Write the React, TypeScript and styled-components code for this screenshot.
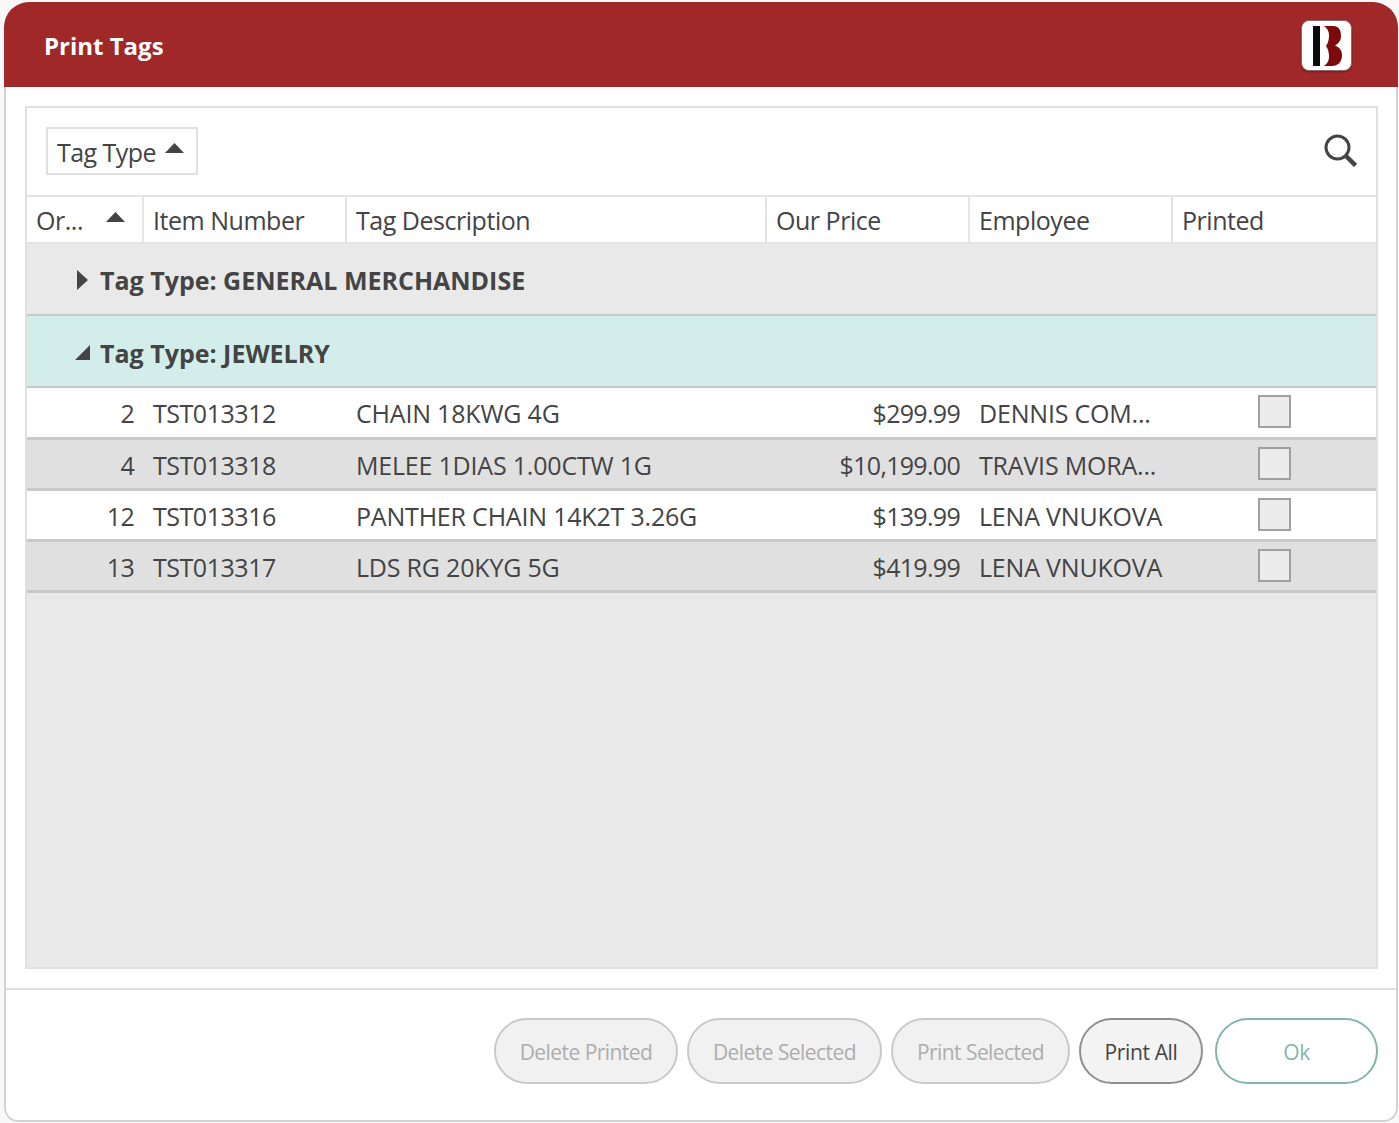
import React from "react";
import styled, { createGlobalStyle } from "styled-components";

const Global = createGlobalStyle`
  html, body { margin: 0; padding: 0; background: #fff; }
  body { font-family: "Open Sans", "Noto Sans", sans-serif; color: #444; }
  * { box-sizing: border-box; }
`;

const Stage = styled.div`
  width: 1399px;
  height: 1123px;
  padding: 2px 1px 1px 4px;
  background: #f8f8f8;
  overflow: hidden;
`;
const Dialog = styled.div`
  width: 1394px;
  height: 1120px;
  border-radius: 25px 25px 14px 14px;
  display: flex;
  flex-direction: column;
  overflow: hidden;
`;
const TitleBar = styled.header`
  height: 85px;
  background: #a12829;
  padding: 2px 46px 0 40px;
  display: flex;
  align-items: center;
  justify-content: space-between;
  flex: none;
`;
const Title = styled.h1`
  margin: 0;
  font-size: 24px;
  line-height: 32px;
  font-weight: 700;
  color: #fff;
`;
const Logo = styled.div`
  width: 51px;
  height: 51px;
  border-radius: 8px;
  background: #fff;
  border: 1px solid #8f6a6a;
  box-shadow: 0 1px 2px rgba(60, 20, 20, 0.5);
  display: flex;
  align-items: center;
  justify-content: center;
`;
const Body = styled.div`
  flex: 1;
  min-height: 0;
  background: #fff;
  border: solid #d2d2d2;
  border-width: 0 2px 2px 2px;
  border-radius: 0 0 14px 14px;
  display: flex;
  flex-direction: column;
`;
const Content = styled.main`
  flex: 1;
  padding: 19px 18px 19px 19px;
  display: flex;
  min-height: 0;
`;
const Grid = styled.section`
  flex: 1;
  border: 2px solid #e0e0e0;
  display: flex;
  flex-direction: column;
  background: #e9e9e9;
`;
const Toolbar = styled.div`
  height: 89px;
  background: #fff;
  padding: 19px 18px 0 19px;
  display: flex;
  align-items: flex-start;
  justify-content: space-between;
  border-bottom: 2px solid #e4e4e4;
  flex: none;
`;
const GroupChip = styled.div`
  width: 152px;
  height: 48px;
  border: 2px solid #e0e0e0;
  display: flex;
  align-items: center;
  padding: 2px 0 0 9px;
  gap: 9px;
  font-size: 25px;
  letter-spacing: -0.55px;
  color: #444;
`;
const SearchButton = styled.div`
  margin-top: 7px;
  width: 34px;
  height: 36px;
  color: #444;
`;
const columns = "116px 203px 420px 203px 203px 1fr";
const HeaderRow = styled.div`
  display: grid;
  grid-template-columns: ${columns};
  height: 47px;
  background: #fff;
  border-bottom: 2px solid #e4e4e4;
  flex: none;
`;
const HeaderCell = styled.div<{ $first?: boolean }>`
  display: flex;
  align-items: center;
  justify-content: space-between;
  padding: 1px 18px 0 9px;
  margin-left: ${(p) => (p.$first ? "0" : "-1px")};
  font-size: 25px;
  letter-spacing: -0.47px;
  color: #444;
  white-space: nowrap;
  border-left: ${(p) => (p.$first ? "0" : "2px solid #e4e4e4")};
`;
const GroupRow = styled.div<{ $open?: boolean }>`
  height: 72px;
  background: ${(p) => (p.$open ? "#d3eeea" : "#e9e9e9")};
  border-bottom: 2px solid #c8c8c8;
  display: flex;
  align-items: center;
  padding: ${(p) => (p.$open ? "3px" : "2px")} 0 0 47px;
  flex: none;
`;
const Expander = styled.span<{ $offset: number }>`
  width: 26px;
  padding-left: ${(p) => p.$offset}px;
  display: flex;
  color: #444;
`;
const GroupLabel = styled.span`
  font-size: 25px;
  font-weight: 700;
  color: #444;
`;
const Row = styled.div<{ $alt?: boolean; $h: number }>`
  display: grid;
  grid-template-columns: ${columns};
  height: ${(p) => p.$h}px;
  background: ${(p) => (p.$alt ? "#e0e0e0" : "#fff")};
  border-bottom: 3px solid #c8c8c8;
  flex: none;
`;
const Cell = styled.div<{ $right?: boolean; $caps?: boolean }>`
  display: flex;
  align-items: center;
  justify-content: ${(p) => (p.$right ? "flex-end" : "flex-start")};
  padding: 1px ${(p) => (p.$right ? "9px" : "0")} 0 ${(p) => (p.$right ? "0" : "10px")};
  font-size: 25px;
  letter-spacing: ${(p) => (p.$caps ? "-0.2px" : p.$right ? "-0.7px" : "-0.47px")};
  color: #444;
  white-space: nowrap;
`;
const CheckCell = styled.div`
  display: flex;
  justify-content: center;
  padding-top: 7px;
`;
const Check = styled.span`
  width: 33px;
  height: 33px;
  background: #ececec;
  border: 2px solid #a0a0a0;
  display: block;
`;
const Footer = styled.footer`
  height: 132px;
  flex: none;
  border-top: 2px solid #dedede;
  padding: 28px 18px 0 0;
  display: flex;
  justify-content: flex-end;
  gap: 9px;
`;
const Pill = styled.button<{ $w: number; $tone: "off" | "on" | "ok" }>`
  width: ${(p) => p.$w}px;
  height: 66px;
  border-radius: 33px;
  font-family: inherit;
  font-size: 21px;
  letter-spacing: ${(p) => (p.$tone === "off" ? "-0.55px" : "-0.35px")};
  padding: 2px 0 0;
  border: 2px solid ${(p) => (p.$tone === "off" ? "#c9c9c9" : p.$tone === "on" ? "#8f8f8f" : "#84b5ab")};
  background: ${(p) => (p.$tone === "ok" ? "#fff" : p.$tone === "on" ? "#f3f3f3" : "#f1f1f1")};
  color: ${(p) => (p.$tone === "off" ? "#adadad" : p.$tone === "on" ? "#444" : "#84b5ab")};
  margin-left: ${(p) => (p.$tone === "ok" ? "3px" : "0")};
`;
const SortArrow = styled.svg<{ $lift: number }>`
  width: 19px;
  height: 10px;
  margin-bottom: ${(p) => p.$lift}px;
  flex: none;
`;

const UpArrow = ({ lift }: { lift: number }) => (
  <SortArrow $lift={lift} viewBox="0 0 19 10">
    <path d="M9.5 0 L19 10 L0 10 Z" fill="#444" />
  </SortArrow>
);

const rows = [
  ["2", "TST013312", "CHAIN 18KWG 4G", "$299.99", "DENNIS COM...", 52],
  ["4", "TST013318", "MELEE 1DIAS 1.00CTW 1G", "$10,199.00", "TRAVIS MORA...", 51],
  ["12", "TST013316", "PANTHER CHAIN 14K2T 3.26G", "$139.99", "LENA VNUKOVA", 51],
  ["13", "TST013317", "LDS RG 20KYG 5G", "$419.99", "LENA VNUKOVA", 51],
] as const;

export default function App() {
  return (
    <Stage>
      <Global />
      <Dialog>
        <TitleBar>
          <Title>Print Tags</Title>
          <Logo>
            <svg width="32" height="42" viewBox="0 0 32 42">
              <rect x="2" y="1" width="7" height="40" fill="#0a0a0a" />
              <path
                d="M13 1 H22 C29 1 30 7 30 11 C30 16 27 19 24 20.5 C28 22 31 25 31 30 C31 37 27 41 21 41 H13 C16 39 18 36 18 32 C18 27 17 24 15 21 C17 18 18 15 18 10 C18 6 16 3 13 1 Z"
                fill="#7d0a0a"
              />
            </svg>
          </Logo>
        </TitleBar>
        <Body>
          <Content>
            <Grid>
              <Toolbar>
                <GroupChip>
                  Tag Type
                  <UpArrow lift={8} />
                </GroupChip>
                <SearchButton>
                  <svg width="33" height="33" viewBox="0 0 33 33" fill="none" stroke="currentColor">
                    <circle cx="13.5" cy="13.5" r="11.5" strokeWidth="3" />
                    <path d="M22 22 L31.5 31.5" strokeWidth="4.5" />
                  </svg>
                </SearchButton>
              </Toolbar>
              <HeaderRow>
                <HeaderCell $first>
                  Or...
                  <UpArrow lift={6} />
                </HeaderCell>
                <HeaderCell>Item Number</HeaderCell>
                <HeaderCell>Tag Description</HeaderCell>
                <HeaderCell>Our Price</HeaderCell>
                <HeaderCell>Employee</HeaderCell>
                <HeaderCell>Printed</HeaderCell>
              </HeaderRow>
              <GroupRow>
                <Expander $offset={3}>
                  <svg width="11" height="20" viewBox="0 0 11 20">
                    <path d="M0 0 L11 10 L0 20 Z" fill="#444" />
                  </svg>
                </Expander>
                <GroupLabel>Tag Type: GENERAL MERCHANDISE</GroupLabel>
              </GroupRow>
              <GroupRow $open>
                <Expander $offset={1}>
                  <svg width="15" height="15" viewBox="0 0 15 15">
                    <path d="M15 0 V15 H0 Z" fill="#444" />
                  </svg>
                </Expander>
                <GroupLabel>Tag Type: JEWELRY</GroupLabel>
              </GroupRow>
              {rows.map((r, i) => (
                <Row key={r[1]} $alt={i % 2 === 1} $h={r[5]}>
                  <Cell $right>{r[0]}</Cell>
                  <Cell>{r[1]}</Cell>
                  <Cell $caps>{r[2]}</Cell>
                  <Cell $right>{r[3]}</Cell>
                  <Cell $caps>{r[4]}</Cell>
                  <CheckCell>
                    <Check />
                  </CheckCell>
                </Row>
              ))}
            </Grid>
          </Content>
          <Footer>
            <Pill $w={184} $tone="off">Delete Printed</Pill>
            <Pill $w={195} $tone="off">Delete Selected</Pill>
            <Pill $w={179} $tone="off">Print Selected</Pill>
            <Pill $w={124} $tone="on">Print All</Pill>
            <Pill $w={163} $tone="ok">Ok</Pill>
          </Footer>
        </Body>
      </Dialog>
    </Stage>
  );
}
